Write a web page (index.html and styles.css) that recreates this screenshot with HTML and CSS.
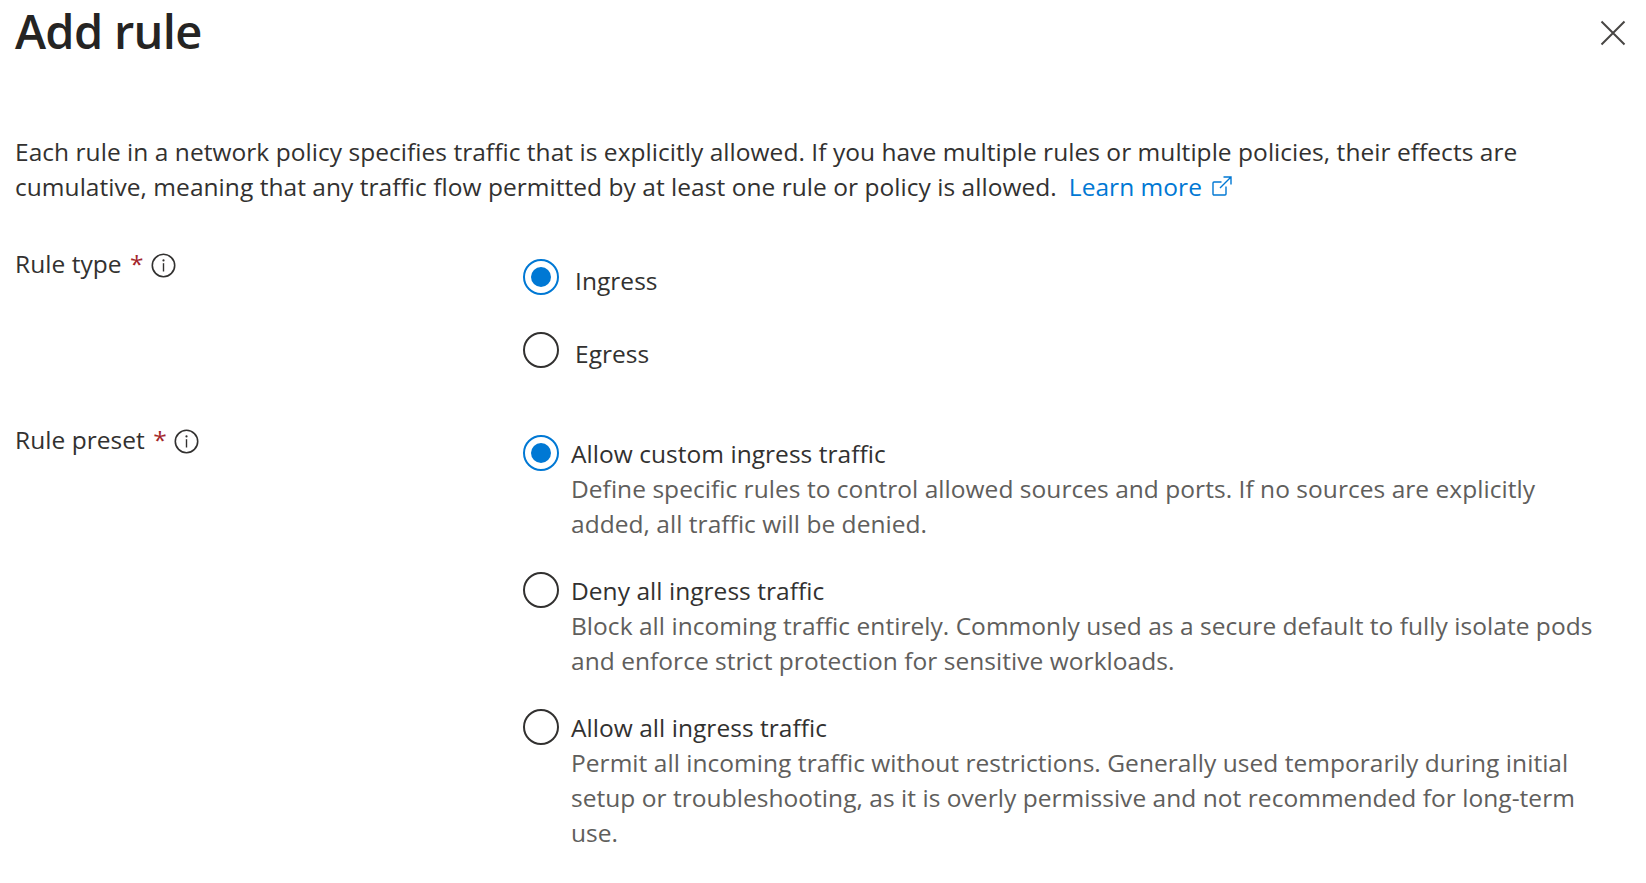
FILE: index.html
```html
<!DOCTYPE html>
<html lang="en">
<head>
<meta charset="utf-8">
<title>Add rule</title>
<link rel="stylesheet" href="styles.css">
</head>
<body>
<main class="panel">
  <header class="head">
    <h1 class="title">Add rule</h1>
    <button class="close" aria-label="Close">
      <svg width="26" height="26" viewBox="0 0 26 26"><path d="M1.5 1.5l23 23M24.5 1.5l-23 23" fill="none" stroke="#484644" stroke-width="2"/></svg>
    </button>
  </header>
  <p class="intro">Each rule in a network policy specifies traffic that is explicitly allowed. If you have multiple rules or multiple policies, their effects are cumulative, meaning that any traffic flow permitted by at least one rule or policy is allowed.<a class="link" href="#">Learn more<svg class="ext" width="22" height="22" viewBox="0 0 22 22"><path d="M15 11.5V19a1 1 0 0 1-1 1H3a1 1 0 0 1-1-1V8a1 1 0 0 1 1-1h7.5M12.5 2H20v7.5M20 2L9 13" fill="none" stroke="#0078d4" stroke-width="1.4"/></svg></a></p>

  <section class="row type-row">
    <div class="label">Rule type <span class="req">*</span>
      <svg class="info" width="25" height="25" viewBox="0 0 25 25"><circle cx="12.5" cy="12.5" r="11.2" fill="none" stroke="#323130" stroke-width="1.6"/><circle cx="12.5" cy="7.4" r="1.1" fill="#323130"/><path d="M12.5 10.2v8.3" stroke="#323130" stroke-width="1.4"/></svg>
    </div>
    <div class="options simple">
      <label class="opt"><span class="radio on"></span><span class="simple-text">Ingress</span></label>
      <label class="opt"><span class="radio"></span><span class="simple-text">Egress</span></label>
    </div>
  </section>

  <section class="row preset-row">
    <div class="label">Rule preset <span class="req">*</span>
      <svg class="info" width="25" height="25" viewBox="0 0 25 25"><circle cx="12.5" cy="12.5" r="11.2" fill="none" stroke="#323130" stroke-width="1.6"/><circle cx="12.5" cy="7.4" r="1.1" fill="#323130"/><path d="M12.5 10.2v8.3" stroke="#323130" stroke-width="1.4"/></svg>
    </div>
    <div class="options rich">
      <label class="opt"><span class="radio on"></span><span class="body"><span class="name">Allow custom ingress traffic</span><span class="desc">Define specific rules to control allowed sources and ports. If no sources are explicitly added, all traffic will be denied.</span></span></label>
      <label class="opt"><span class="radio"></span><span class="body"><span class="name">Deny all ingress traffic</span><span class="desc">Block all incoming traffic entirely. Commonly used as a secure default to fully isolate pods and enforce strict protection for sensitive workloads.</span></span></label>
      <label class="opt"><span class="radio"></span><span class="body"><span class="name">Allow all ingress traffic</span><span class="desc">Permit all incoming traffic without restrictions. Generally used temporarily during initial setup or troubleshooting, as it is overly permissive and not recommended for long-term use.</span></span></label>
    </div>
  </section>
</main>
</body>
</html>
```
FILE: styles.css
```css
* { box-sizing: border-box; }
html, body { margin: 0; height: 100%; background: #fff; overflow: hidden; }
body { font-family: "Open Sans", "Noto Sans", "Liberation Sans", sans-serif; font-size: 24.5px; line-height: 35px; color: #323130; letter-spacing: 0.04px; }
.panel { padding: 0 20px 0 15px; }
.head { display: flex; justify-content: space-between; align-items: flex-start; height: 134px; }
.title { margin: 0; font-size: 47px; line-height: 62px; font-weight: 600; color: #252423; letter-spacing: -0.7px; }
.close { margin: 20px 0 0 0; padding: 0; border: 0; background: none; display: block; width: 26px; height: 26px; }
.close svg { display: block; }
.intro { margin: 0 0 42px; width: 1530px; }
.link { color: #0078d4; text-decoration: none; margin-left: 12px; }
.ext { margin-left: 9px; vertical-align: -1px; }
.row { display: grid; grid-template-columns: 508px 1fr; }
.label { display: flex; align-items: center; gap: 3px; height: 35px; white-space: pre; }
.req { color: #a4262c; margin-left: -1px; }
.info { flex: none; margin-left: 4px; margin-top: 3px; }
.options { display: flex; flex-direction: column; }
.opt { display: flex; align-items: flex-start; }
.radio { flex: none; width: 36px; height: 36px; border-radius: 50%; border: 2px solid #323130; position: relative; }
.radio.on { border-color: #0078d4; }
.radio.on::after { content: ""; position: absolute; inset: 6px; border-radius: 50%; background: #0078d4; }
.type-row { height: 176px; }
.simple { padding-top: 13px; gap: 34px; }
.simple-text { margin: 4px 0 0 16px; }
.rich { padding-top: 13px; gap: 31px; }
.body { display: block; margin: 1px 0 0 12px; width: 1030px; }
.name, .desc { display: block; }
.desc { color: #605e5c; }
```
